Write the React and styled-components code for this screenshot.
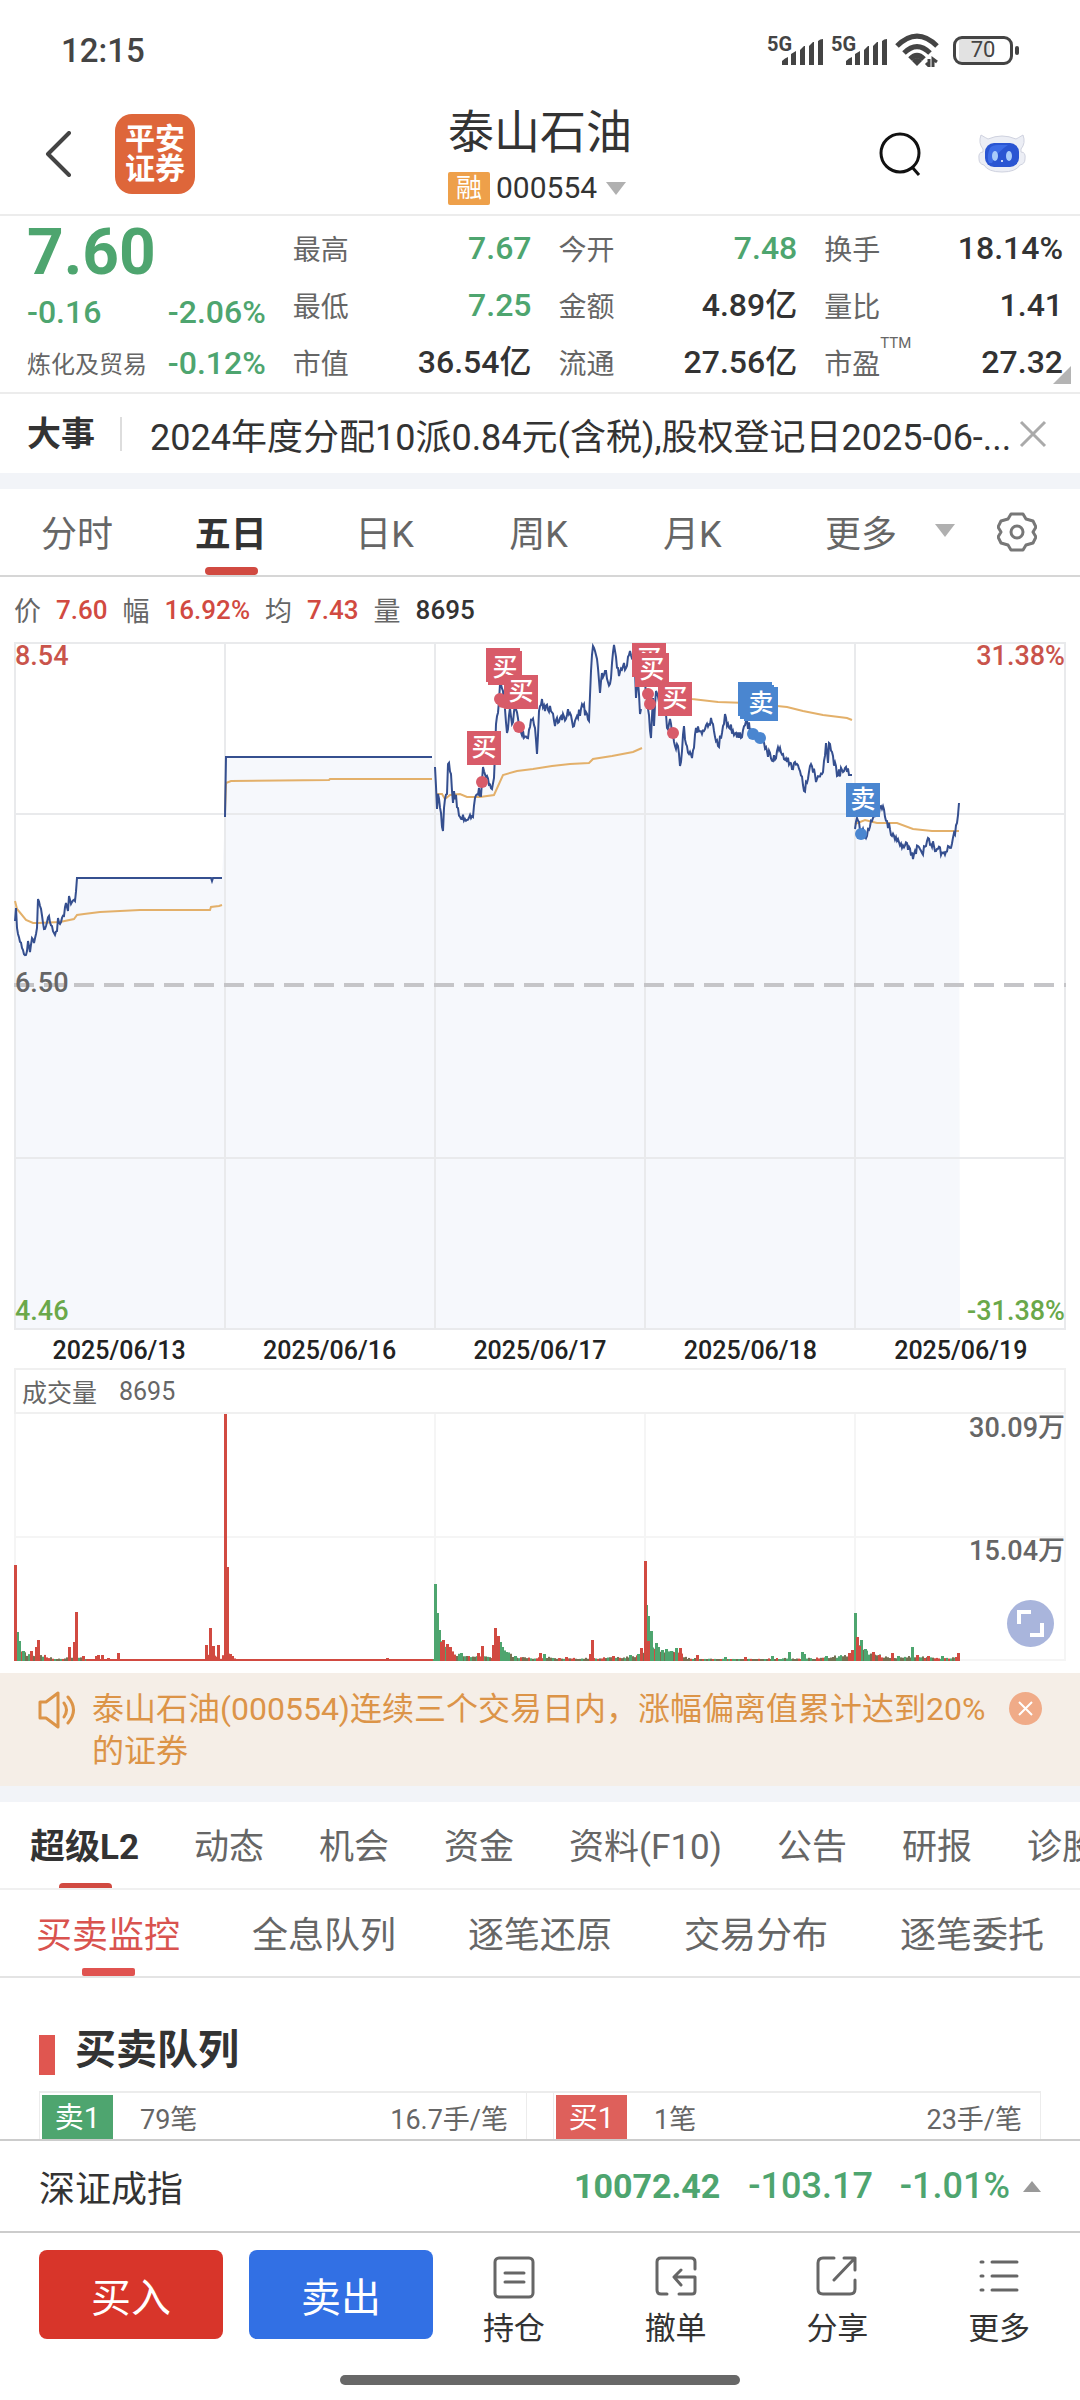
import { useState } from 'react';
import styled, { createGlobalStyle } from 'styled-components';

const GlobalStyle = createGlobalStyle`
  * {
    box-sizing: border-box;
  }
  body {
    margin: 0;
    background: #fff;
    color: #333;
    font-family: Roboto, 'Noto Sans CJK SC', sans-serif;
    overflow-x: hidden;
  }
  button {
    font: inherit;
    color: inherit;
    background: none;
    border: none;
    padding: 0;
    cursor: pointer;
  }
  a {
    color: inherit;
    text-decoration: none;
  }
  svg {
    display: block;
    flex: none;
  }
`;

const RED = '#d14a41';
const GREEN = '#4ea56f';
const BUY = '#d85b69';
const SELL = '#4a86d0';

const Page = styled.div`
  width: 100%;
  overflow: hidden;
`;

// Status bar
const StatusBar = styled.div`
  display: flex;
  align-items: center;
  justify-content: space-between;
  height: 100px;
  padding: 0 60px 0 61px;
  font-size: 33px;
  font-weight: 500;
  color: #444;
`;

const StatusIcons = styled.div`
  display: flex;
  align-items: center;
  gap: 4px;
`;

const Signal = styled.div`
  display: flex;
  width: 60px;
  height: 32px;
  font-size: 20px;
  line-height: 20px;
  font-weight: 700;
  svg {
    margin-left: -10px;
    margin-top: 4px;
  }
`;

const Battery = styled.div`
  position: relative;
  display: flex;
  align-items: center;
  justify-content: center;
  width: 60px;
  height: 29px;
  margin: 0 7px 0 10px;
  border: 3px solid #444;
  border-radius: 9px;
  font-size: 22px;
  line-height: 22px;
  font-weight: 400;
  background: linear-gradient(90deg, #fff 3px, #e2e2e2 3px, #e2e2e2 34px, #fff 34px);
  &::after {
    content: '';
    position: absolute;
    right: -9px;
    top: 7px;
    width: 4px;
    height: 9px;
    border-radius: 2px;
    background: #444;
  }
`;

// Header
const Header = styled.header`
  display: grid;
  grid-template-columns: 1fr auto 1fr;
  align-items: center;
  height: 116px;
  padding: 0 45px 6px 45px;
  border-bottom: 2px solid #ececec;
`;

const HeaderLeft = styled.div`
  display: flex;
  align-items: center;
  gap: 43px;
`;

const HeaderRight = styled.div`
  display: flex;
  align-items: center;
  justify-content: flex-end;
  gap: 56px;
  padding-right: 9px;
`;

const Logo = styled.a`
  display: flex;
  align-items: center;
  justify-content: center;
  width: 80px;
  height: 80px;
  border-radius: 17px;
  background: #de663a;
  color: #fff;
  font-size: 30px;
  line-height: 30px;
  font-weight: 700;
  text-align: center;
`;

const Title = styled.h1`
  margin: 0 0 10px;
  font-size: 46px;
  line-height: 58px;
  font-weight: 400;
`;

const Code = styled.button`
  display: flex;
  align-items: center;
  gap: 6px;
  font-size: 30px;
  line-height: 34px;
  svg {
    margin-left: 3px;
  }
`;

const Badge = styled.span`
  width: 42px;
  height: 33px;
  line-height: 32px;
  border-radius: 2px;
  background: #eea04a;
  color: #fff;
  font-size: 26px;
  text-align: center;
`;

// Quote
const Quote = styled.section`
  position: relative;
  display: grid;
  grid-template-columns: repeat(4, 1fr);
  gap: 27px;
  padding: 3px 17px 1px 27px;
  border-bottom: 2px solid #ececec;
`;

const QuoteColumn = styled.div`
  display: flex;
  flex-direction: column;
`;

const Price = styled.div`
  height: 70px;
  line-height: 67px;
  font-size: 64px;
  font-weight: 700;
  color: ${GREEN};
`;

const Row = styled.div`
  display: flex;
  align-items: center;
  justify-content: space-between;
  height: ${props => props.$tight ? '45px' : '57px'};
`;

const Label = styled.span`
  font-size: ${props => props.$small ? '24px' : '28px'};
  color: #666;
  white-space: nowrap;
  sup {
    font-size: 15px;
    line-height: 0;
    vertical-align: 26px;
  }
`;

const Value = styled.span`
  font-size: 32px;
  line-height: 40px;
  font-weight: 500;
  white-space: nowrap;
  color: ${props => props.$green ? GREEN : '#333'};
`;

const Corner = styled.i`
  position: absolute;
  right: 9px;
  bottom: 8px;
  border: 9px solid transparent;
  border-right-color: #b4b4b4;
  border-bottom-color: #b4b4b4;
`;

// News
const News = styled.section`
  display: flex;
  align-items: center;
  height: 79px;
  padding: 0 33px 0 27px;
  font-size: 36px;
  strong {
    font-size: 34px;
    padding-right: 25px;
    border-right: 2px solid #ddd;
    line-height: 34px;
  }
  a {
    flex: 1;
    padding-left: 28px;
    white-space: nowrap;
  }
`;

const Band = styled.div`
  height: 16px;
  background: #f2f4f8;
`;

// Tabs
const Tabs = styled.nav`
  display: flex;
  align-items: stretch;
  height: 88px;
  border-bottom: 2px solid ${props => props.$line || '#d6d6d6'};
  padding: ${props => props.$pad || '0'};
  gap: ${props => props.$gap || '0'};
`;

const Tab = styled.button`
  position: relative;
  flex: ${props => props.$flex || 'none'};
  display: flex;
  align-items: center;
  justify-content: center;
  gap: 38px;
  padding-bottom: 3px;
  font-size: ${props => props.$size || '36px'};
  white-space: nowrap;
  font-weight: ${props => props.$active && !props.$plain ? 700 : 400};
  color: ${props => props.$active ? props.$plain ? '#d9534f' : '#333' : '#666'};
  &::after {
    content: '';
    display: ${props => props.$active ? 'block' : 'none'};
    position: absolute;
    bottom: 0;
    left: 50%;
    width: 53px;
    height: ${props => props.$bar || '8px'};
    margin-left: -26px;
    border-radius: ${props => props.$barRadius || '4px'};
    background: ${props => props.$plain ? '#e05350' : RED};
  }
`;

const MoreTab = styled(Tab)`
  padding-left: 14px;
`;

// Charts
const Readout = styled.dl`
  display: flex;
  align-items: center;
  gap: 15px;
  height: 65px;
  margin: 0;
  padding: 0 14px;
  font-size: 27px;
  dt {
    color: #666;
  }
  dd {
    margin: 0;
    font-size: 26px;
    font-weight: 500;
    color: ${RED};
  }
  dd:last-child {
    color: #333;
  }
`;

const ChartBox = styled.div`
  position: relative;
  margin: 0 14px;
  svg {
    width: 100%;
  }
`;

const AxisLabel = styled.span`
  position: absolute;
  font-size: 27px;
  line-height: 28px;
  font-weight: 500;
  color: ${props => props.$color};
  top: ${props => props.$top};
  left: ${props => props.$right ? 'auto' : '1px'};
  right: ${props => props.$right ? '1px' : 'auto'};
`;

const Marker = styled.span`
  position: absolute;
  width: 34px;
  height: 34px;
  background: ${props => props.$sell ? SELL : BUY};
  color: #fff;
  font-size: 25px;
  line-height: 34px;
  font-weight: 500;
  text-align: center;
`;

const Dates = styled.div`
  display: grid;
  grid-template-columns: repeat(5, 1fr);
  margin: 0 14px;
  height: 38px;
  padding-top: 3px;
  text-align: center;
  font-size: 25px;
  line-height: 36px;
  font-weight: 500;
  color: #222;
`;

const VolumeHead = styled.div`
  display: flex;
  align-items: center;
  gap: 22px;
  height: 46px;
  margin: 0 14px;
  padding: 0 6px;
  border: 2px solid #f0f0f0;
  font-size: 25px;
  color: #666;
`;

const Expand = styled.button`
  position: absolute;
  right: 12px;
  bottom: 14px;
  width: 47px;
  height: 47px;
  border-radius: 50%;
  background: #a9b5dc;
  display: flex;
  align-items: center;
  justify-content: center;
  svg {
    width: 27px;
  }
`;

// Notice
const Notice = styled.section`
  display: flex;
  align-items: flex-start;
  margin-top: 12px;
  padding: 15px 38px 14px 38px;
  background: #f5eee7;
  color: #dc9448;
  font-size: 32px;
  line-height: 42px;
  p {
    flex: 1;
    margin: 0 10px 0 16px;
  }
  svg {
    margin-top: 3px;
  }
`;

const NoticeClose = styled.button`
  display: flex;
  align-items: center;
  justify-content: center;
  width: 33px;
  height: 33px;
  margin-top: 4px;
  border-radius: 50%;
  background: #f0ab88;
  svg {
    margin: 0;
  }
`;

// Queue
const Section = styled.section`
  padding: 44px 39px 0;
`;

const SectionTitle = styled.h2`
  display: flex;
  align-items: center;
  gap: 20px;
  margin: 0 0 13px;
  font-size: 41px;
  line-height: 56px;
  font-weight: 700;
  &::before {
    content: '';
    width: 16px;
    height: 40px;
    margin-top: 9px;
    background: #e05650;
  }
`;

const QueueTable = styled.table`
  width: 100%;
  table-layout: fixed;
  border-spacing: 0;
  border-top: 2px solid #ececec;
  font-size: 27px;
  color: #666;
  td, th {
    height: 46px;
    padding: 2px 0 0;
    font-weight: 400;
  }
`;

const SideCell = styled.th`
  width: 74px;
  border-left: 1px solid #ececec;
  span {
    display: block;
    height: 44px;
    margin: 0 0 0 2px;
    color: #fff;
    font-size: 29px;
    line-height: 46px;
    background: ${props => props.$sell ? GREEN : '#de605b'};
  }
`;

const CountCell = styled.td`
  && {
    padding-left: 27px;
  }
`;

const LotCell = styled.td`
  && {
    padding-right: 18px;
    text-align: right;
    border-right: 1px solid #ececec;
  }
`;

const GapCell = styled.td`
  width: 26px;
`;

// Bottom
const IndexBar = styled.div`
  display: flex;
  align-items: center;
  height: 94px;
  padding: 0 39px;
  border-top: 2px solid #ccc;
  border-bottom: 2px solid #ccc;
  font-size: 36px;
  font-weight: 500;
  color: ${GREEN};
  span:first-child {
    flex: 1;
    font-weight: 400;
    color: #333;
  }
  strong {
    font-size: 34px;
    margin-right: 1px;
  }
  strong ~ span {
    margin-left: 27px;
  }
  svg {
    margin-left: 13px;
  }
`;

const ActionBar = styled.div`
  display: flex;
  padding: 17px 0 0 39px;
`;

const TradeButton = styled.button`
  width: 184px;
  height: 89px;
  margin-right: ${props => props.$sell ? '0' : '26px'};
  border-radius: 8px;
  color: #fff;
  font-size: 40px;
  background: ${props => props.$sell ? '#3270e4' : '#d8352a'};
`;

const Actions = styled.div`
  flex: 1;
  display: grid;
  grid-template-columns: repeat(4, 1fr);
`;

const Action = styled.button`
  display: flex;
  flex-direction: column;
  align-items: center;
  gap: 8px;
  padding-top: 6px;
  font-size: 31px;
  line-height: 44px;
`;

const HomeBar = styled.div`
  width: 400px;
  height: 10px;
  margin: 24px auto 16px;
  border-radius: 5px;
  background: #686868;
`;

// Price and average lines, one entry per trading day
const days = [
  {
    jitter: 3,
    price: [[1, 279], [2, 266], [3, 286], [4, 292], [8, 306], [12, 313], [14, 299], [16, 310], [18, 296], [20, 301], [23, 286], [24, 257], [26, 264], [30, 287], [32, 284], [35, 274], [40, 291], [43, 289], [44, 276], [46, 282], [50, 274], [52, 261], [54, 269], [55, 254], [57, 262], [61, 259], [63, 236], [197, 236], [198, 239], [199, 236], [208, 236]],
    average: [[1, 259], [3, 267], [12, 278], [19, 281], [24, 281], [46, 280], [60, 277], [63, 273], [70, 272], [86, 270], [126, 268], [196, 268], [197, 265], [205, 264], [208, 263]],
  },
  {
    jitter: 0,
    price: [[211, 175], [212, 115], [418, 115]],
    average: [[211, 170], [212, 141], [217, 139], [315, 138], [316, 137], [418, 137]],
  },
  {
    jitter: 5,
    price: [[421, 125], [423, 167], [424, 152], [427, 171], [429, 189], [430, 166], [433, 152], [434, 122], [437, 132], [439, 161], [440, 149], [444, 166], [448, 177], [459, 175], [461, 156], [465, 146], [467, 154], [469, 125], [473, 134], [478, 147], [480, 136], [482, 82], [485, 59], [486, 42], [489, 49], [493, 91], [496, 66], [498, 82], [501, 62], [505, 84], [513, 96], [518, 78], [521, 86], [523, 112], [525, 69], [528, 57], [531, 69], [536, 64], [541, 84], [546, 76], [556, 71], [560, 84], [563, 74], [569, 64], [575, 79], [577, 29], [579, 4], [583, 17], [586, 51], [588, 31], [591, 29], [596, 42], [600, 3], [605, 34], [610, 21], [612, 26], [616, 9], [621, 29], [622, 56], [624, 39], [626, 72], [627, 67]],
    average: [[423, 152], [428, 152], [431, 157], [436, 153], [446, 152], [453, 155], [466, 155], [480, 153], [489, 133], [503, 129], [519, 127], [538, 124], [556, 122], [575, 121], [579, 117], [598, 114], [619, 110], [628, 106]],
  },
  {
    jitter: 5,
    price: [[631, 39], [633, 56], [637, 96], [639, 56], [640, 84], [642, 49], [646, 62], [652, 72], [653, 86], [656, 77], [659, 92], [662, 107], [664, 104], [666, 124], [668, 109], [670, 84], [672, 102], [678, 116], [682, 86], [688, 92], [697, 76], [700, 89], [704, 104], [708, 91], [711, 72], [713, 84], [719, 89], [727, 96], [732, 79], [739, 92], [749, 99], [753, 109], [759, 119], [763, 109], [769, 112], [778, 127], [783, 122], [786, 129], [790, 149], [796, 124], [803, 137], [808, 132], [810, 119], [812, 101], [814, 121], [815, 101], [819, 114], [823, 134], [831, 126], [835, 133], [838, 133]],
    average: [[645, 52], [678, 57], [704, 60], [733, 61], [773, 65], [789, 69], [809, 73], [833, 76], [838, 78]],
  },
  {
    jitter: 5,
    price: [[841, 187], [843, 176], [847, 189], [853, 194], [859, 176], [867, 164], [873, 179], [878, 194], [888, 206], [893, 201], [899, 217], [904, 204], [908, 211], [914, 196], [923, 207], [929, 211], [936, 206], [940, 191], [943, 181], [945, 161]],
    average: [[841, 182], [851, 178], [863, 181], [883, 181], [899, 187], [918, 189], [945, 189]],
  },
];

const markers = [
  { x: 453, y: 89, text: '买' },
  { x: 472, y: 6 },
  { x: 474, y: 9, text: '买' },
  { x: 490, y: 33, text: '买' },
  { x: 618, y: 1, text: '买' },
  { x: 621, y: 11, text: '买' },
  { x: 644, y: 40, text: '买' },
  { x: 724, y: 40, sell: true },
  { x: 726, y: 43, sell: true },
  { x: 730, y: 45, text: '卖', sell: true },
  { x: 832, y: 141, text: '卖', sell: true },
];

const dots = [
  [468, 140], [486, 57], [489, 60], [505, 85], [634, 52], [636, 62], [659, 91],
  [739, 92, 1], [746, 96, 1], [847, 192, 1],
];

const noise = (n) => {
  const v = Math.sin(n * 12.9898) * 43758.5453;
  return v - Math.floor(v);
};

// Adds the minute-by-minute wobble between two known points
const wobble = (points, amount) => {
  const out = [points[0]];
  for (let i = 1; i < points.length; i++) {
    const [x0, y0] = points[i - 1];
    const [x1, y1] = points[i];
    if (y0 !== y1 && amount) {
      for (let x = x0 + 1; x < x1; x++) {
        const y = y0 + (y1 - y0) * (x - x0) / (x1 - x0);
        out.push([x, y + (noise(x) - 0.5) * 2 * amount]);
      }
    }
    out.push([x1, y1]);
  }
  return out;
};

const toPoints = (points) => points.map(([x, y]) => `${x},${y.toFixed(1)}`).join(' ');

const lines = days.map(day => wobble(day.price, day.jitter));

const envelope = [[0, 14], [10, 8], [20, 5], [26, 7], [40, 2], [55, 4], [62, 6], [70, 2], [110, 1], [190, 1], [196, 8], [206, 3], [212, 10], [222, 1], [419, 1], [421, 30], [430, 14], [440, 9], [450, 5], [465, 6], [478, 3], [482, 22], [488, 12], [500, 4], [520, 3], [530, 5], [545, 3], [575, 3], [610, 4], [628, 8], [631, 40], [638, 18], [650, 9], [665, 9], [672, 3], [700, 2], [740, 2], [770, 3], [800, 3], [838, 7], [842, 22], [850, 11], [865, 6], [880, 4], [900, 5], [920, 3], [945, 4]];

const spikes = {
  [GREEN]: [[3, 29], [5, 20], [9, 10], [421, 77], [423, 48], [425, 31], [447, 8], [486, 19], [488, 14], [492, 9], [501, 5], [530, 7], [616, 6], [624, 7], [632, 56], [634, 45], [637, 30], [642, 18], [644, 14], [648, 11], [652, 12], [657, 10], [662, 13], [711, 4], [758, 5], [775, 9], [788, 9], [790, 7], [812, 5], [841, 48], [847, 21], [851, 12], [884, 5], [898, 14], [928, 5]],
  [RED]: [[1, 96], [17, 10], [22, 14], [24, 21], [55, 14], [60, 19], [62, 49], [69, 5], [82, 5], [84, 6], [88, 6], [94, 3], [104, 8], [154, 2], [170, 2], [184, 2], [192, 16], [196, 33], [199, 15], [204, 16], [211, 247], [213, 94], [218, 5], [251, 2], [315, 2], [373, 3], [411, 2], [427, 19], [429, 21], [433, 17], [436, 14], [464, 8], [468, 15], [479, 16], [481, 33], [484, 25], [526, 8], [552, 4], [576, 7], [578, 21], [599, 5], [627, 13], [631, 100], [634, 20], [666, 13], [683, 6], [731, 4], [835, 8], [838, 11], [843, 24], [845, 15], [859, 9], [865, 6], [878, 8], [903, 6], [914, 5], [942, 4], [944, 8]],
};

const bars = [];
for (let i = 1; i < envelope.length; i++) {
  const [x0, h0] = envelope[i - 1];
  const [x1, h1] = envelope[i];
  for (let x = x0; x < x1; x += 2) {
    const h = h0 + (h1 - h0) * (x - x0) / (x1 - x0);
    const pick = noise(x + 7);
    const quiet = x > 70 && x < 419;
    const fill = quiet || pick > 0.75 ? RED : pick > 0.5 ? GREEN : '#757052';
    bars.push({ x, h: Math.max(2, h * (0.6 + noise(x) * 0.5)), fill });
  }
}

const PriceChart = () => (
  <ChartBox>
    <svg viewBox="0 0 1052 688" height="688" preserveAspectRatio="none">
      <polygon points={`1,688 ${toPoints(lines.flat())} 946,688`} fill="#f6f8fc" />
      <g stroke="#e9eaec" strokeWidth="2" fill="none">
        <rect x="1" y="1" width="1050" height="686" />
        <path d="M0 172H1052M0 516H1052M211 0V688M421 0V688M631 0V688M841 0V688" />
      </g>
      <path d="M0 343H1052" stroke="#c5c5c8" strokeWidth="4" strokeDasharray="20 10" />
      {days.map((day, i) => (
        <polyline key={i} points={toPoints(day.average)} fill="none" stroke="#e3b06a" strokeWidth="2" />
      ))}
      {lines.map((line, i) => (
        <polyline key={i} points={toPoints(line)} fill="none" stroke="#354f8f" strokeWidth="2" />
      ))}
      {dots.map(([x, y, sell]) => (
        <circle key={`${x}-${y}`} cx={x} cy={y} r="6" fill={sell ? SELL : BUY} />
      ))}
    </svg>
    {markers.map(({ x, y, text, sell }) => (
      <Marker key={x} $sell={sell} style={{ left: `${x / 10.52}%`, top: y }}>{text}</Marker>
    ))}
    <AxisLabel $color="#c9544b" $top="0">8.54</AxisLabel>
    <AxisLabel $color="#666" $top="327px">6.50</AxisLabel>
    <AxisLabel $color="#6aa84a" $top="655px">4.46</AxisLabel>
    <AxisLabel $color="#c9544b" $top="0" $right>31.38%</AxisLabel>
    <AxisLabel $color="#6aa84a" $top="655px" $right>-31.38%</AxisLabel>
  </ChartBox>
);

const VolumeChart = () => (
  <ChartBox>
    <svg viewBox="0 0 1052 247" height="247" preserveAspectRatio="none">
      <path d="M0 123H1052M1 0V247M421 0V247M631 0V247M841 0V247M1051 0V247M0 246H1052" stroke="#f5f5f5" strokeWidth="2" />
      {bars.map((bar, i) => (
        <rect key={i} x={bar.x} y={247 - bar.h} width="2" height={bar.h} fill={bar.fill} />
      ))}
      {Object.entries(spikes).map(([color, list]) => list.map(([x, h]) => (
        <rect key={color + x} x={x - 1} y={247 - h} width="3" height={h} fill={color} />
      )))}
    </svg>
    <AxisLabel $color="#666" $top="0" $right>30.09万</AxisLabel>
    <AxisLabel $color="#666" $top="123px" $right>15.04万</AxisLabel>
    <Expand aria-label="全屏">
      <svg height="27" viewBox="0 0 27 27" fill="none" stroke="#fff" strokeWidth="4">
        <path d="M2 14V2H14M25 13V25H13" />
      </svg>
    </Expand>
  </ChartBox>
);

const SignalBars = () => (
  <Signal>
    5G
    <svg width="42" height="28" viewBox="0 0 42 28" fill="#444">
      <path d="M0 27v-4q3-3 6-4v8zM9 27V16l5-3v14zM18 27V12l4-4h1v19zM27 27V8l4-4h1v23zM36 27V3q2-2 5-2v26z" />
    </svg>
  </Signal>
);

const Triangle = ({ width = 20, height = 13, up, color = '#b0b0b0' }) => (
  <svg width={width} height={height} viewBox="0 0 20 13" preserveAspectRatio="none" fill={color}>
    <path d={up ? 'M0 13H20L10 0z' : 'M0 0H20L10 13z'} />
  </svg>
);

const periods = ['分时', '五日', '日K', '周K', '月K'];
const sections = ['超级L2', '动态', '机会', '资金', '资料(F10)', '公告', '研报', '诊股'];
const monitors = ['买卖监控', '全息队列', '逐笔还原', '交易分布', '逐笔委托'];
const dates = ['2025/06/13', '2025/06/16', '2025/06/17', '2025/06/18', '2025/06/19'];

const quotes = [
  [['最高', '7.67', true], ['最低', '7.25', true], ['市值', '36.54亿']],
  [['今开', '7.48', true], ['金额', '4.89亿'], ['流通', '27.56亿']],
  [['换手', '18.14%'], ['量比', '1.41'], ['市盈', '27.32']],
];

const actions = [
  {
    name: '持仓',
    icon: <><rect x="2" y="2" width="38" height="39" rx="4" /><path d="M12 17H31M12 26H31" /></>,
  },
  {
    name: '撤单',
    icon: <path d="M40 13V6Q40 2 36 2H6Q2 2 2 6V34Q2 38 6 38H12M24 38H37Q40 38 40 35V21H20M26 14L19 21L26 29" />,
  },
  {
    name: '分享',
    icon: <path d="M18 2H7Q2 2 2 7V33Q2 38 7 38H34Q39 38 39 33V24M28 2H39V14M39 2L18 24" />,
  },
  {
    name: '更多',
    icon: <path d="M3 6H5M14 6H39M3 20H5M14 20H39M3 34H5M14 34H39" />,
  },
];

const App = () => {
  // States
  const [period, setPeriod] = useState('五日');
  const [section, setSection] = useState('超级L2');
  const [monitor, setMonitor] = useState('买卖监控');

  // Component
  return (
    <Page>
      <GlobalStyle />
      <StatusBar>
        <span>12:15</span>
        <StatusIcons>
          <SignalBars />
          <SignalBars />
          <svg width="44" height="34" viewBox="0 0 44 34" fill="none" stroke="#444" strokeWidth="5">
            <path d="M2 13Q22 -7 42 13M9 20Q22 7 35 20M15 26Q22 19 29 26" />
            <path d="M22 25Q26 25 27 28L22 33L17 28Q18 25 22 25z" fill="#444" stroke="none" />
            <path d="M34 26V33L31 30M38 34V26L42 29" strokeWidth="3" />
          </svg>
          <Battery>70</Battery>
        </StatusIcons>
      </StatusBar>

      <Header>
        <HeaderLeft>
          <button aria-label="返回">
            <svg width="27" height="46" viewBox="0 0 27 46" fill="none" stroke="#444" strokeWidth="4" strokeLinecap="round" strokeLinejoin="round">
              <path d="M24 2L3 23L24 44" />
            </svg>
          </button>
          <Logo href="#">平安<br />证券</Logo>
        </HeaderLeft>
        <div>
          <Title>泰山石油</Title>
          <Code>
            <Badge>融</Badge>
            000554
            <Triangle />
          </Code>
        </div>
        <HeaderRight>
          <button aria-label="搜索">
            <svg width="44" height="44" viewBox="0 0 44 44" fill="none" stroke="#111" strokeWidth="3">
              <circle cx="22" cy="21" r="19" />
              <path d="M34 35L41 43" />
            </svg>
          </button>
          <button aria-label="助手">
            <svg width="48" height="42" viewBox="0 0 48 42">
              <path d="M3 2Q8 5 10 6Q24 0 38 6Q40 5 45 2Q48 10 43 16V19Q48 19 47 26Q47 31 42 32Q38 39 24 39Q10 39 6 32Q1 31 1 26Q0 19 5 19V16Q0 10 3 2z" fill="#eceef5" stroke="#cfd2df" strokeWidth="1" />
              <rect x="7" y="10" width="34" height="24" rx="9" fill="#2a55d2" />
              <path d="M11 30Q8 24 12 15Q14 12 20 12H30Q20 18 14 30z" fill="#3d6ce6" />
              <ellipse cx="17" cy="23" rx="3" ry="5" fill="#a9ccfa" />
              <ellipse cx="31" cy="23" rx="3" ry="5" fill="#a9ccfa" />
              <circle cx="24" cy="28" r="1" fill="#fff" />
            </svg>
          </button>
        </HeaderRight>
      </Header>

      <Quote>
        <QuoteColumn>
          <Price>7.60</Price>
          <Row $tight>
            <Value $green>-0.16</Value>
            <Value $green>-2.06%</Value>
          </Row>
          <Row>
            <Label $small>炼化及贸易</Label>
            <Value $green>-0.12%</Value>
          </Row>
        </QuoteColumn>
        {quotes.map((column, i) => (
          <QuoteColumn key={i}>
            {column.map(([label, value, green]) => (
              <Row key={label}>
                <Label>{label}{label === '市盈' && <sup>TTM</sup>}</Label>
                <Value $green={green}>{value}</Value>
              </Row>
            ))}
          </QuoteColumn>
        ))}
        <Corner />
      </Quote>

      <News>
        <strong>大事</strong>
        <a href="#">2024年度分配10派0.84元(含税),股权登记日2025-06-...</a>
        <button aria-label="关闭">
          <svg width="28" height="28" viewBox="0 0 28 28" stroke="#aaa" strokeWidth="3">
            <path d="M2 2L26 26M26 2L2 26" />
          </svg>
        </button>
      </News>
      <Band />

      <Tabs $pad="0 43px 0 0">
        {periods.map(name => (
          <Tab key={name} $flex="154" $active={name === period} onClick={() => setPeriod(name)}>{name}</Tab>
        ))}
        <MoreTab $flex="214">更多<Triangle /></MoreTab>
        <button aria-label="设置">
          <svg width="40" height="40" viewBox="0 0 40 40" fill="none" stroke="#777" strokeWidth="3" strokeLinejoin="round">
            <path d="M14 2H26L29 7L36 9L39 15L36 20L39 25L36 31L29 33L26 38H14L11 33L4 31L1 25L4 20L1 15L4 9L11 7z" />
            <circle cx="20" cy="20" r="6" />
          </svg>
        </button>
      </Tabs>

      <Readout>
        <dt>价</dt><dd>7.60</dd>
        <dt>幅</dt><dd>16.92%</dd>
        <dt>均</dt><dd>7.43</dd>
        <dt>量</dt><dd>8695</dd>
      </Readout>
      <PriceChart />
      <Dates>{dates.map(date => <span key={date}>{date}</span>)}</Dates>
      <VolumeHead><span>成交量</span><span>8695</span></VolumeHead>
      <VolumeChart />

      <Notice>
        <svg width="38" height="38" viewBox="0 0 38 38" fill="none" stroke="#dc9448" strokeWidth="3" strokeLinejoin="round" strokeLinecap="round">
          <path d="M2 11H8L20 2V36L8 27H2zM26 12Q31 19 26 26M30 6Q41 19 30 32" />
        </svg>
        <p>泰山石油(000554)连续三个交易日内，涨幅偏离值累计达到20%的证券</p>
        <NoticeClose aria-label="关闭提示">
          <svg width="15" height="15" viewBox="0 0 15 15" stroke="#fff" strokeWidth="2">
            <path d="M1 1L14 14M14 1L1 14" />
          </svg>
        </NoticeClose>
      </Notice>
      <Band />

      <Tabs $pad="0 0 0 30px" $gap="55px" $line="#f0f0f0">
        {sections.map(name => (
          <Tab key={name} $size="35px" $bar="5px" $barRadius="4px 4px 0 0" $active={name === section} onClick={() => setSection(name)}>{name}</Tab>
        ))}
      </Tabs>
      <Tabs $line="#e4e4e4">
        {monitors.map(name => (
          <Tab key={name} $flex="1" $plain $barRadius="2px" $active={name === monitor} onClick={() => setMonitor(name)}>{name}</Tab>
        ))}
      </Tabs>

      <Section>
        <SectionTitle>买卖队列</SectionTitle>
        <QueueTable>
          <tbody>
            <tr>
              <SideCell scope="row" $sell><span>卖1</span></SideCell>
              <CountCell>79笔</CountCell>
              <LotCell>16.7手/笔</LotCell>
              <GapCell />
              <SideCell scope="row"><span>买1</span></SideCell>
              <CountCell>1笔</CountCell>
              <LotCell>23手/笔</LotCell>
            </tr>
          </tbody>
        </QueueTable>
      </Section>

      <IndexBar>
        <span>深证成指</span>
        <strong>10072.42</strong>
        <span>-103.17</span>
        <span>-1.01%</span>
        <Triangle width={18} height={11} up color="#999" />
      </IndexBar>

      <ActionBar>
        <TradeButton>买入</TradeButton>
        <TradeButton $sell>卖出</TradeButton>
        <Actions>
          {actions.map(({ name, icon }) => (
            <Action key={name}>
              <svg width="42" height="43" viewBox="0 0 42 43" fill="none" stroke="#666" strokeWidth="3" strokeLinecap="round" strokeLinejoin="round">{icon}</svg>
              {name}
            </Action>
          ))}
        </Actions>
      </ActionBar>
      <HomeBar />
    </Page>
  );
};

export default App;
